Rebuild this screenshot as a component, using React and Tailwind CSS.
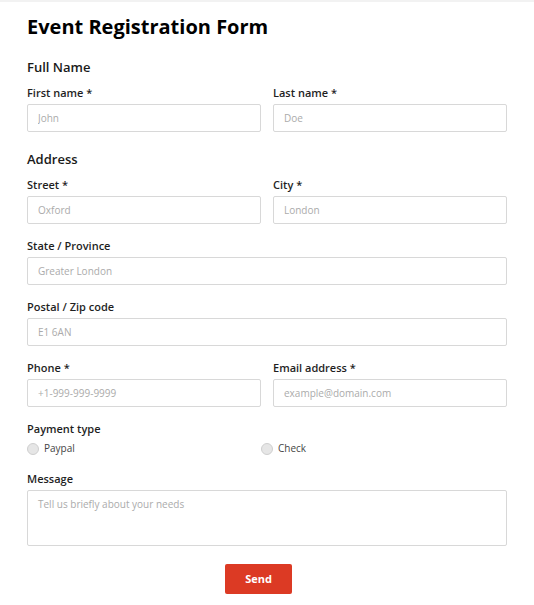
import React, { useState } from 'react';

const Label = ({ children }) => (
  <label className="block text-[11px] leading-[16px] font-semibold text-[#1f1f1f]">{children}</label>
);

const Field = ({ label, placeholder, type = 'text' }) => (
  <div className="flex flex-col">
    <Label>{label}</Label>
    <input
      type={type}
      placeholder={placeholder}
      className="mt-[3px] h-[28px] w-full border border-[#d8d8d8] rounded-[2px] px-[10px] text-[10px] text-[#333] placeholder:text-[#ababab] outline-none"
    />
  </div>
);

const Radio = ({ name, value, label, checked, onChange }) => (
  <label className="flex items-center gap-[5px] text-[10px] text-[#444] cursor-pointer">
    <input type="radio" name={name} value={value} checked={checked} onChange={onChange} className="sr-only" />
    <span className="w-[12px] h-[12px] rounded-full border border-[#cfcfcf] bg-[#e6e6e6]" />
    {label}
  </label>
);

export default function App() {
  const [payment, setPayment] = useState('');

  return (
    <div className="min-h-screen bg-white border-t-2 border-[#f2f2f2] font-['Open_Sans',sans-serif]">
      <form className="w-[534px] px-[27px] pt-[11px] pb-[10px]" onSubmit={(e) => e.preventDefault()}>
        <h1 className="text-[20px] leading-[28px] font-bold text-black">Event Registration Form</h1>

        {/* Full name */}
        <h2 className="mt-[17px] text-[13px] leading-[18px] font-semibold text-[#1a1a1a]">Full Name</h2>
        <div className="mt-[9px] grid grid-cols-2 gap-x-[12px]">
          <Field label="First name *" placeholder="John" />
          <Field label="Last name *" placeholder="Doe" />
        </div>

        {/* Address */}
        <h2 className="mt-[18px] text-[13px] leading-[18px] font-semibold text-[#1a1a1a]">Address</h2>
        <div className="mt-[9px] flex flex-col gap-[14px]">
          <div className="grid grid-cols-2 gap-x-[12px]">
            <Field label="Street *" placeholder="Oxford" />
            <Field label="City *" placeholder="London" />
          </div>
          <Field label="State / Province" placeholder="Greater London" />
          <Field label="Postal / Zip code" placeholder="E1 6AN" />
          <div className="grid grid-cols-2 gap-x-[12px]">
            <Field label="Phone *" placeholder="+1-999-999-9999" type="tel" />
            <Field label="Email address *" placeholder="example@domain.com" type="email" />
          </div>

          <div className="flex flex-col">
            <Label>Payment type</Label>
            <div className="mt-[4px] mb-[1px] flex">
              <div className="w-[234px]">
                <Radio name="payment" value="paypal" label="Paypal" checked={payment === 'paypal'} onChange={() => setPayment('paypal')} />
              </div>
              <Radio name="payment" value="check" label="Check" checked={payment === 'check'} onChange={() => setPayment('check')} />
            </div>
          </div>

          <div className="flex flex-col">
            <Label>Message</Label>
            <textarea
              placeholder="Tell us briefly about your needs"
              className="mt-[3px] h-[56px] w-full resize-none border border-[#d8d8d8] rounded-[2px] px-[10px] py-[6px] text-[10px] text-[#333] placeholder:text-[#ababab] outline-none"
            />
          </div>
        </div>

        <button
          type="submit"
          className="mt-[18px] ml-[198px] w-[67px] h-[30px] rounded-[2px] bg-[#dc3a24] text-white text-[11px] font-bold"
        >
          Send
        </button>
      </form>
    </div>
  );
}
